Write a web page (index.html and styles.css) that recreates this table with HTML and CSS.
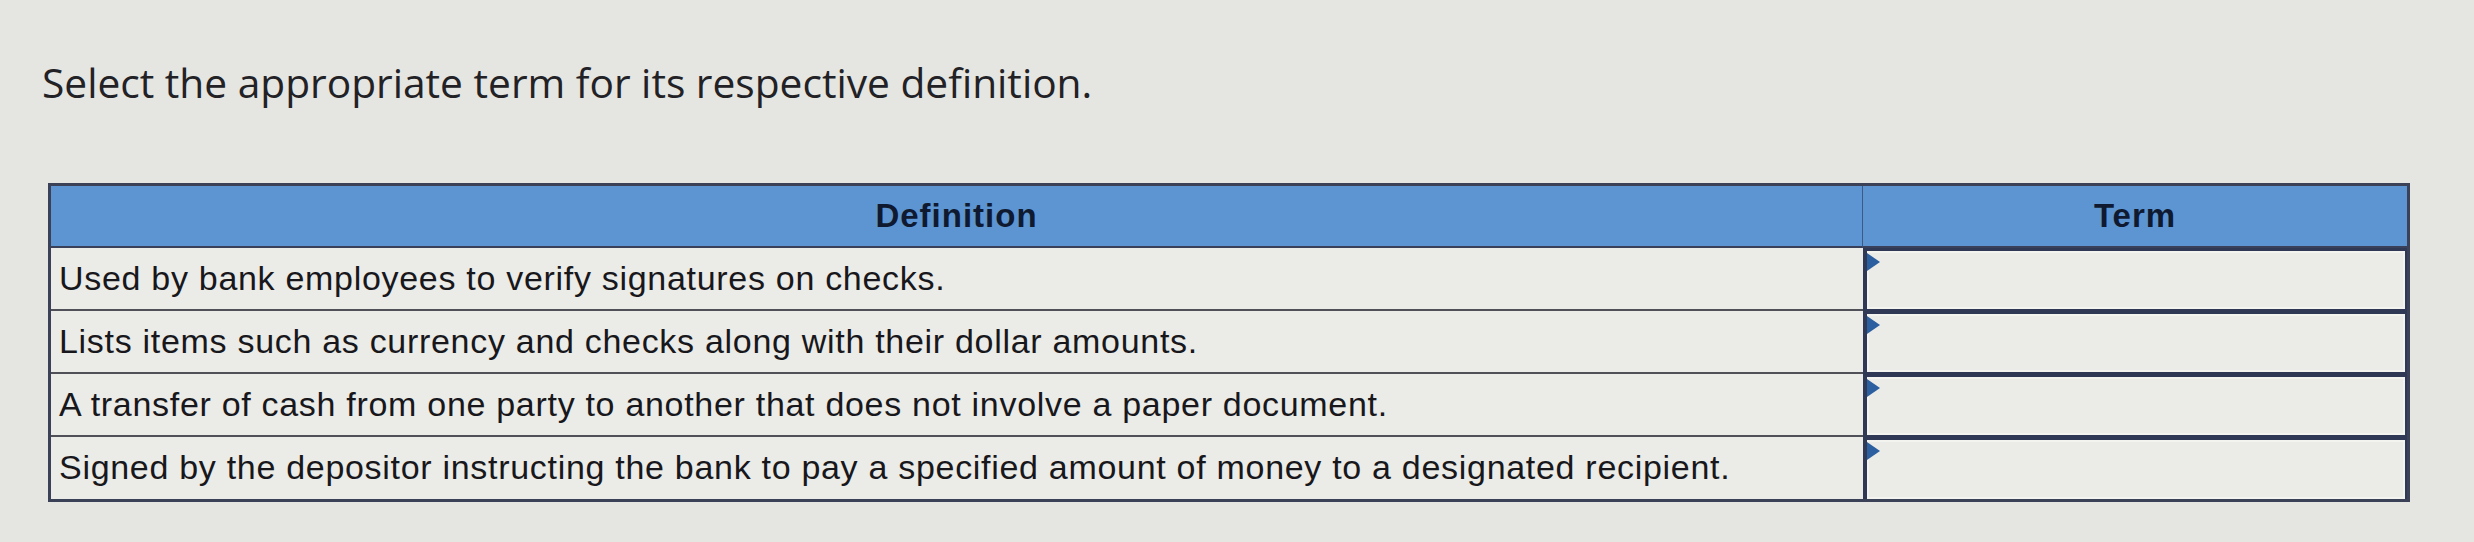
FILE: index.html
```html
<!DOCTYPE html>
<html lang="en">
<head>
<meta charset="utf-8">
<title>Select the appropriate term</title>
<link rel="stylesheet" href="styles.css">
</head>
<body>
<main class="page">
  <p class="title">Select the appropriate term for its respective definition.</p>
  <div class="grid">
    <div class="hcell hdef">Definition</div>
    <div class="hcell hterm">Term</div>

    <div class="dcell">Used by bank employees to verify signatures on checks.</div>
    <div class="tcell"><span class="marker"></span><div class="input"></div></div>

    <div class="dcell">Lists items such as currency and checks along with their dollar amounts.</div>
    <div class="tcell"><span class="marker"></span><div class="input"></div></div>

    <div class="dcell">A transfer of cash from one party to another that does not involve a paper document.</div>
    <div class="tcell"><span class="marker"></span><div class="input"></div></div>

    <div class="dcell last">Signed by the depositor instructing the bank to pay a specified amount of money to a designated recipient.</div>
    <div class="tcell last"><span class="marker"></span><div class="input"></div></div>
  </div>
</main>
</body>
</html>
```

FILE: styles.css
```css
html, body {
  margin: 0;
  padding: 0;
  background: #e5e5e1;
}

.page {
  box-sizing: border-box;
  width: 2474px;
  height: 542px;
  padding: 56px 0 0 42px;
  overflow: hidden;
}

.title {
  margin: 0;
  font-family: "Open Sans", "Liberation Sans", sans-serif;
  font-size: 40.7px;
  font-weight: 500;
  line-height: 52px;
  color: #222226;
  white-space: nowrap;
}

.grid {
  box-sizing: border-box;
  width: 2362px;
  margin: 75px 0 0 6px;
  display: grid;
  grid-template-columns: 1812px 1fr;
  border: 3px solid #3b4157;
  background: #ebebe7;
}

.hcell {
  height: 60px;
  line-height: 60px;
  background: #5c95d2;
  border-bottom: 2px solid #38405a;
  font-family: "Liberation Sans", Arial, sans-serif;
  font-weight: bold;
  font-size: 33px;
  letter-spacing: 1px;
  color: #0f1a30;
  text-align: center;
}

.hdef {
  border-right: 1px solid #3d5a85;
}

.dcell {
  height: 61px;
  line-height: 61px;
  padding-left: 8px;
  border-bottom: 2px solid #505058;
  font-family: "Liberation Sans", Arial, sans-serif;
  font-size: 34px;
  letter-spacing: 0.7px;
  color: #18181c;
  white-space: nowrap;
}

.dcell.last {
  border-bottom: 0;
  height: 62px;
}

.tcell {
  position: relative;
  box-sizing: border-box;
  height: 63px;
  border-left: 4px solid #2f3956;
  border-bottom: 2px solid #2f3956;
  display: flex;
}

.tcell.last {
  border-bottom: 0;
  height: 62px;
}

.input {
  flex: 1;
  border-top: 3px solid #2f3956;
  border-right: 2px solid #2f3956;
  box-shadow: inset 0 0 0 2px #f3f3f0;
  background: #ebebe7;
}

.marker {
  position: absolute;
  left: 0;
  top: 5px;
  width: 0;
  height: 0;
  border-left: 13px solid #2b5f9f;
  border-top: 9px solid transparent;
  border-bottom: 9px solid transparent;
}
```
